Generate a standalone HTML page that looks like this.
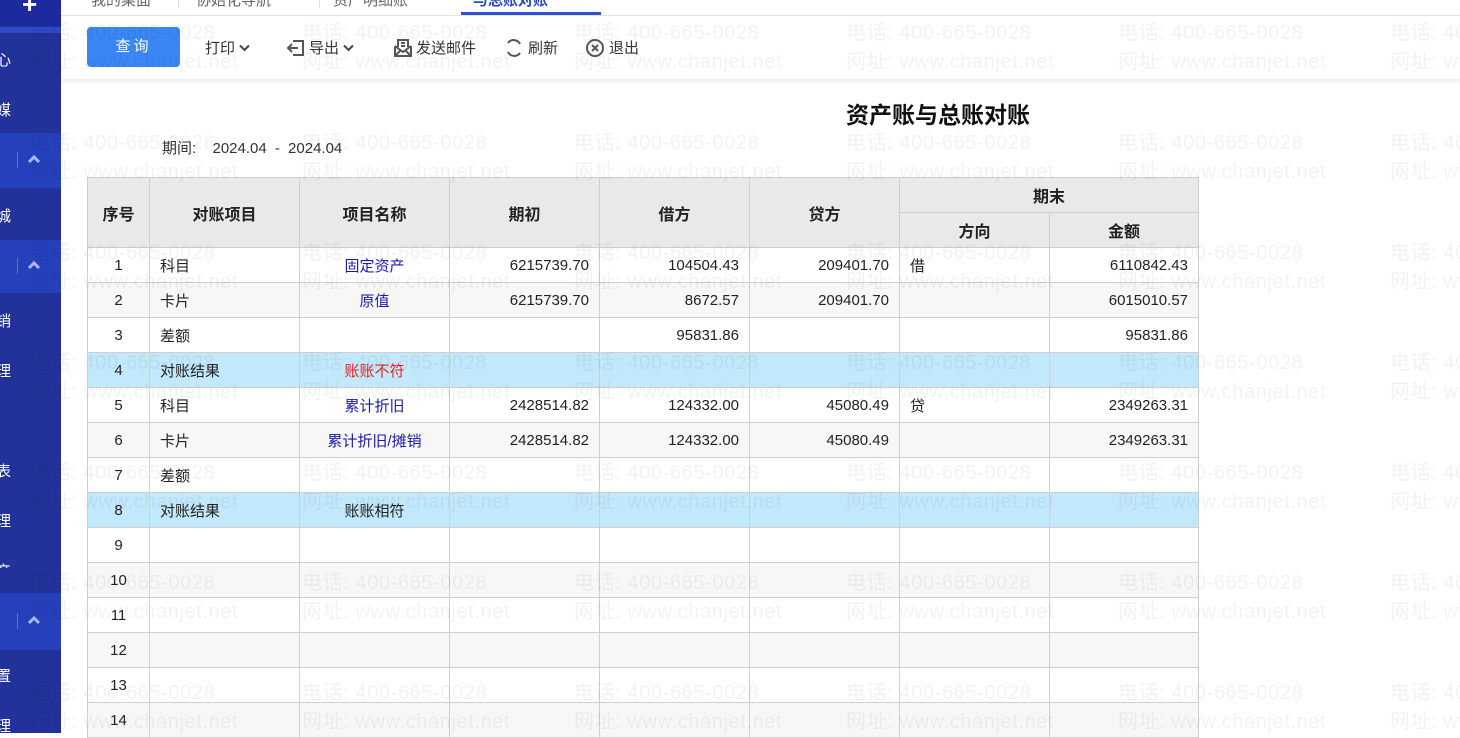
<!DOCTYPE html>
<html><head><meta charset="utf-8"><style>
*{margin:0;padding:0;box-sizing:border-box}
body{width:1460px;height:733px;overflow:hidden;background:#fff;font-family:"Liberation Sans","Noto Sans CJK SC",sans-serif;position:relative;font-size:14px;color:#222}
.sb{position:absolute;left:0;top:0;width:61px;height:733px;background:#22329a}
.sb div{position:absolute;left:0;width:61px}
.sb .t{color:#fff;font-size:15px;left:-4px}
.sec{background:#2540bb}
.chev{position:absolute;left:27px}
.bar{position:absolute;left:17px;width:1px;height:16px;background:#5a6fd0}
.tabs{position:absolute;left:61px;top:0;right:0;height:16px;border-bottom:1px solid #e3e3e3;overflow:hidden}
.tabs span{position:absolute;top:-11px;font-size:15px;color:#666}
.tb{position:absolute;left:61px;top:17px;right:0;height:62px;background:#fff;box-shadow:0 3px 4px rgba(0,0,0,.08)}
.btn{position:absolute;left:26px;top:10px;width:93px;height:40px;background:#3a86f4;border-radius:4px;color:#fff;text-align:center;line-height:40px;font-size:15px;letter-spacing:3px}
.ti{position:absolute;top:20px;font-size:15px;color:#333;display:flex;align-items:center;gap:4px}
table{position:absolute;left:87px;top:177px;border-collapse:collapse;font-size:15px}
td,th{border:1px solid #cfcfcf;height:35px;padding:0 10px}
th{background:#e9e9e9;font-weight:bold;font-size:16px}
tr.g td{background:#f7f7f7}
tr.b td{background:#c2e8fb}
.c{text-align:center}.r{text-align:right}
.bl{color:#1a1aa8}
.wm{position:absolute;left:0;top:0;width:1460px;height:733px;pointer-events:none;font-size:20px;color:rgba(0,0,0,.05);white-space:nowrap;letter-spacing:0.6px}
.wm span{position:absolute}
</style></head><body>
<div class="sb">
 <div style="top:0;height:26px;background:#1b2b9e"></div>
 <div style="top:0;left:22px;width:18px;height:8px;color:#fff;font-size:26px;line-height:8px;font-weight:bold">+</div>
 <div style="top:27px;height:6px;background:#3048c6"></div>
 <div class="t" style="top:49px">心</div>
 <div class="t" style="top:99px">媒</div>
 <div class="sec" style="top:133px;height:55px"><span class="bar" style="top:19px"></span><svg class="chev" style="top:22px" width="14" height="9" viewBox="0 0 14 9"><path d="M2 7l5-5 5 5" fill="none" stroke="#a9b8ff" stroke-width="3"/></svg></div>
 <div class="t" style="top:205px">城</div>
 <div class="sec" style="top:240px;height:53px"><span class="bar" style="top:18px"></span><svg class="chev" style="top:21px" width="14" height="9" viewBox="0 0 14 9"><path d="M2 7l5-5 5 5" fill="none" stroke="#a9b8ff" stroke-width="3"/></svg></div>
 <div class="t" style="top:310px">销</div>
 <div class="t" style="top:360px">理</div>
 <div class="t" style="top:460px">表</div>
 <div class="t" style="top:510px">理</div>
 <div class="t" style="top:560px;height:8px;overflow:hidden">产</div>
 <div class="sec" style="top:593px;height:57px"><span class="bar" style="top:20px"></span><svg class="chev" style="top:23px" width="14" height="9" viewBox="0 0 14 9"><path d="M2 7l5-5 5 5" fill="none" stroke="#a9b8ff" stroke-width="3"/></svg></div>
 <div class="t" style="top:665px">置</div>
 <div class="t" style="top:715px">理</div>
</div>
<div class="tabs">
 <span style="left:30px">我的桌面</span><span style="left:117px;top:-4px;width:1px;height:12px;background:#ddd"></span>
 <span style="left:135px">协始化导航</span><span style="left:258px;top:-4px;width:1px;height:12px;background:#ddd"></span>
 <span style="left:272px">资产明细账</span>
 <span style="left:412px;color:#2a48c8;font-weight:bold">与总账对账</span><span style="left:512px;color:#999">×</span>
 <div style="position:absolute;left:400px;width:140px;bottom:0;height:3px;background:#2e4fd0"></div>
</div>
<div class="tb">
 <div class="btn">查询</div>
 <div class="ti" style="left:144px">打印<svg width="11" height="8" viewBox="0 0 11 8"><path d="M1 1.5l4.5 4.5 4.5-4.5" fill="none" stroke="#444" stroke-width="2"/></svg></div>
 <div class="ti" style="left:226px"><svg width="18" height="18" viewBox="0 0 18 18" fill="none" stroke="#555" stroke-width="2"><path d="M6 2h10v14H6M1 9h10M5 5L1 9l4 4"/></svg>导出<svg width="11" height="8" viewBox="0 0 11 8"><path d="M1 1.5l4.5 4.5 4.5-4.5" fill="none" stroke="#444" stroke-width="2"/></svg></div>
 <div class="ti" style="left:333px"><svg width="18" height="18" viewBox="0 0 18 18" fill="none" stroke="#555" stroke-width="2"><path d="M4 8V1h10v7M1 7v10h16V7M1 17l6-6M17 17l-6-6M1 7l8 6 8-6M7 4h4M7 7h4"/></svg>发送邮件</div>
 <div class="ti" style="left:443px"><svg width="20" height="20" viewBox="0 0 20 20" fill="none" stroke="#555" stroke-width="2"><path d="M16 6A7 7 0 0 0 4 5M4 14a7 7 0 0 0 12 1"/></svg>刷新</div>
 <div class="ti" style="left:524px"><svg width="20" height="20" viewBox="0 0 20 20" fill="none" stroke="#555" stroke-width="2"><circle cx="10" cy="10" r="8"/><path d="M7 7l6 6M13 7l-6 6"/></svg>退出</div>
</div>
<div style="position:absolute;left:846px;top:96px;font-size:23px;font-weight:bold;color:#111">资产账与总账对账</div>
<div style="position:absolute;left:162px;top:137px;font-size:15px;color:#333;word-spacing:4px">期间:&nbsp;&nbsp;2024.04 - 2024.04</div>
<table>
<tr><th rowspan="2" style="width:62px">序号</th><th rowspan="2" style="width:150px">对账项目</th><th rowspan="2" style="width:150px">项目名称</th><th rowspan="2" style="width:150px">期初</th><th rowspan="2" style="width:150px">借方</th><th rowspan="2" style="width:150px">贷方</th><th colspan="2">期末</th></tr>
<tr><th style="width:150px">方向</th><th style="width:149px">金额</th></tr>
<tr><td class="c">1</td><td>科目</td><td class="c bl">固定资产</td><td class="r">6215739.70</td><td class="r">104504.43</td><td class="r">209401.70</td><td>借</td><td class="r">6110842.43</td></tr>
<tr class="g"><td class="c">2</td><td>卡片</td><td class="c bl">原值</td><td class="r">6215739.70</td><td class="r">8672.57</td><td class="r">209401.70</td><td></td><td class="r">6015010.57</td></tr>
<tr><td class="c">3</td><td>差额</td><td></td><td></td><td class="r">95831.86</td><td></td><td></td><td class="r">95831.86</td></tr>
<tr class="b"><td class="c">4</td><td>对账结果</td><td class="c" style="color:#e8202a">账账不符</td><td></td><td></td><td></td><td></td><td></td></tr>
<tr><td class="c">5</td><td>科目</td><td class="c bl">累计折旧</td><td class="r">2428514.82</td><td class="r">124332.00</td><td class="r">45080.49</td><td>贷</td><td class="r">2349263.31</td></tr>
<tr class="g"><td class="c">6</td><td>卡片</td><td class="c bl">累计折旧/摊销</td><td class="r">2428514.82</td><td class="r">124332.00</td><td class="r">45080.49</td><td></td><td class="r">2349263.31</td></tr>
<tr><td class="c">7</td><td>差额</td><td></td><td></td><td></td><td></td><td></td><td></td></tr>
<tr class="b"><td class="c">8</td><td>对账结果</td><td class="c">账账相符</td><td></td><td></td><td></td><td></td><td></td></tr>
<tr><td class="c">9</td><td></td><td></td><td></td><td></td><td></td><td></td><td></td></tr>
<tr class="g"><td class="c">10</td><td></td><td></td><td></td><td></td><td></td><td></td><td></td></tr>
<tr><td class="c">11</td><td></td><td></td><td></td><td></td><td></td><td></td><td></td></tr>
<tr class="g"><td class="c">12</td><td></td><td></td><td></td><td></td><td></td><td></td><td></td></tr>
<tr><td class="c">13</td><td></td><td></td><td></td><td></td><td></td><td></td><td></td></tr>
<tr class="g"><td class="c">14</td><td></td><td></td><td></td><td></td><td></td><td></td><td></td></tr>
</table>
<div class="wm" id="wm"></div>
<script>
var w=document.getElementById('wm'),h='';
for(var r=0;r<7;r++)for(var c=0;c<6;c++){var x=30+c*272,y=16+r*110;
h+='<span style="left:'+x+'px;top:'+y+'px">电话: 400-665-0028</span><span style="left:'+x+'px;top:'+(y+29)+'px">网址: www.chanjet.net</span>';}
w.innerHTML=h;
</script>
</body></html>
